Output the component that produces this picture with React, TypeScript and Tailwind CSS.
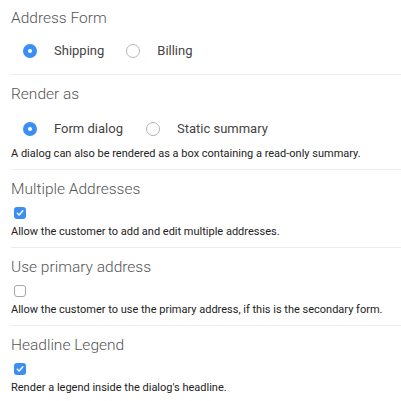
import React from "react";

const Radio = ({ checked, label }: { checked?: boolean; label: string }) => (
  <div className="flex items-center">
    {checked ? (
      <span className="flex h-[14px] w-[14px] items-center justify-center rounded-full bg-[#3b8ff3]">
        <span className="block h-[4px] w-[4px] rounded-full bg-white" />
      </span>
    ) : (
      <span className="block h-[14px] w-[14px] rounded-full border border-[#b5b5b5] bg-white" />
    )}
    <span className="ml-[17px] text-[13px] text-[#444]">{label}</span>
  </div>
);

const Checkbox = ({ checked }: { checked?: boolean }) =>
  checked ? (
    <span className="flex h-[12px] w-[12px] items-center justify-center rounded-[3px] bg-[#3b8ff3]">
      <svg width="8" height="8" viewBox="0 0 8 8" fill="none">
        <path d="M1.3 4.2 L3.2 6 L6.8 1.8" stroke="white" strokeWidth="1.4" strokeLinecap="round" strokeLinejoin="round" />
      </svg>
    </span>
  ) : (
    <span className="block h-[12px] w-[12px] rounded-[3px] border border-[#a8a8a8] bg-white" />
  );

const Heading = ({ children }: { children: React.ReactNode }) => (
  <div className="h-[16px] text-[15.5px] font-light leading-[16px] text-[#555]">{children}</div>
);

const Note = ({ children }: { children: React.ReactNode }) => (
  <div className="text-[11px] leading-[12px] text-[#222]">{children}</div>
);

const CheckSection = ({
  title,
  checked,
  note,
  last,
}: {
  title: string;
  checked?: boolean;
  note: string;
  last?: boolean;
}) => (
  <section className={`flex h-[78px] flex-col pt-[11px] ${last ? "" : "border-b border-[#ececec]"}`}>
    <Heading>{title}</Heading>
    <div className="mt-[10px] pl-[3px]">
      <Checkbox checked={checked} />
    </div>
    <div className="mt-[7px]">
      <Note>{note}</Note>
    </div>
  </section>
);

export default function App() {
  return (
    <div className="h-[401px] w-[401px] bg-white pl-[11px] font-['Roboto',sans-serif]">
      <section className="flex h-[75px] flex-col border-b border-[#ececec] pt-[10px]">
        <Heading>Address Form</Heading>
        <div className="mt-[15px] flex items-center gap-[22px] pl-[12px]">
          <Radio checked label="Shipping" />
          <Radio label="Billing" />
        </div>
      </section>

      <section className="flex h-[95px] flex-col border-b border-[#ececec] pt-[11px]">
        <Heading>Render as</Heading>
        <div className="mt-[17px] flex items-center gap-[23px] pl-[12px]">
          <Radio checked label="Form dialog" />
          <Radio label="Static summary" />
        </div>
        <div className="mt-[9px]">
          <Note>A dialog can also be rendered as a box containing a read-only summary.</Note>
        </div>
      </section>

      <CheckSection
        title="Multiple Addresses"
        checked
        note="Allow the customer to add and edit multiple addresses."
      />
      <CheckSection
        title="Use primary address"
        note="Allow the customer to use the primary address, if this is the secondary form."
      />
      <CheckSection
        title="Headline Legend"
        checked
        note="Render a legend inside the dialog's headline."
        last
      />
    </div>
  );
}
